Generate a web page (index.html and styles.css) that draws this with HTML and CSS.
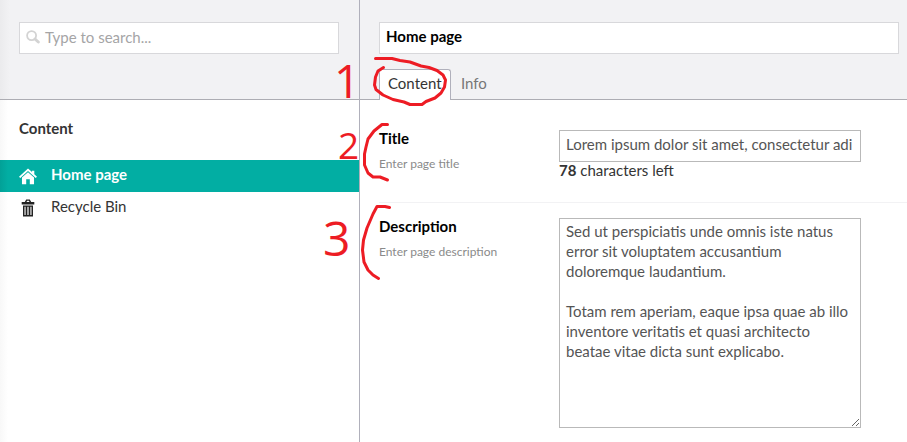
FILE: index.html
```html
<!DOCTYPE html>
<html lang="en">
<head>
<meta charset="utf-8">
<title>Home page</title>
<link rel="stylesheet" href="styles.css">
</head>
<body>
<div class="app">
  <aside class="sidebar">
    <div class="sidebar-header">
      <div class="search">
        <svg class="search-icon" width="14" height="14" viewBox="0 0 14 14"><circle cx="5.6" cy="5.6" r="4.5"/><path d="M9 9l3.3 3"/></svg>
        <span>Type to search...</span>
      </div>
    </div>
    <h2 class="tree-title">Content</h2>
    <nav class="tree">
      <a class="node active">
        <svg class="node-icon" width="18" height="17" viewBox="0 0 20 18"><path d="M10 0L0 9.2l1.4 1.5L10 3l8.600 7.700L20 9.200l-3-2.800V2.500h-2.500v1.600z"/><path d="M10 4.200L3.300 10.200V17.500H8V12h4v5.500h4.700V10.200z"/></svg>
        <span>Home page</span>
      </a>
      <a class="node">
        <svg class="node-icon" width="18" height="18" viewBox="0 0 18 18"><path d="M3 3h2.800l1.400-2.500h3.600L12.200 3H15.300v2.500H2.700V3zM7.500 3h3l-.6-1.300H8.100z"/><path fill-rule="evenodd" d="M4 6.500h10V17.500H4zM5.500 7.800v8.200h1.100V7.800zM8.400 7.800v8.200h1.200V7.800zM11.400 7.800v8.200h1.100V7.800z"/></svg>
        <span>Recycle Bin</span>
      </a>
    </nav>
  </aside>
  <main class="editor">
    <header class="editor-header">
      <div class="name-field">Home page</div>
      <div class="tabs">
        <a class="tab selected">Content</a>
        <a class="tab">Info</a>
      </div>
    </header>
    <section class="property">
      <div class="label"><h3>Title</h3><small>Enter page title</small></div>
      <div class="control">
        <div class="textbox">Lorem ipsum dolor sit amet, consectetur adi</div>
        <p class="counter"><b>78</b> characters left</p>
      </div>
    </section>
    <section class="property second">
      <div class="label"><h3>Description</h3><small>Enter page description</small></div>
      <div class="control">
        <textarea class="textarea">Sed ut perspiciatis unde omnis iste natus error sit voluptatem accusantium doloremque laudantium.

Totam rem aperiam, eaque ipsa quae ab illo inventore veritatis et quasi architecto beatae vitae dicta sunt explicabo.</textarea>
      </div>
    </section>
  </main>
  <svg class="notes" width="907" height="442" viewBox="0 0 907 442">
    <path d="M375.500 58.500H392L400 60.500L410 62L421 66L429 67.500L437 70.500L443 75L445.500 80L444.500 87L441 93L435 98L426 101.500L422 104.500L410 104.500L404 102L393 99.500L383 95L376 89.500L374.500 85L375.500 77L378 71L383.500 67.500"/>
    <path d="M387.500 124.500H382L374 131L368 139L366 147L364.500 154L364.500 165L368 173L373 177H380L387.500 180"/>
    <path d="M389.500 207.500L385 206.500H377L373 214L367 228L363.500 240L362.500 250L364 262L368 270L373 275L378.500 278.500"/>
    <text class="one" x="334" y="98">1</text>
    <text class="two" x="338" y="159">2</text>
    <text class="three" x="323" y="256">3</text>
  </svg>
</div>
</body>
</html>
```
FILE: styles.css
```css
* { box-sizing: border-box; }
body { margin: 0; font: 15px/20px Lato, sans-serif; color: #343434; background: #fff; }
h2, h3, p { margin: 0; }
.app { position: relative; display: flex; width: 907px; height: 442px; overflow: hidden; }
.sidebar { width: 360px; border-right: 1px solid #b0b0bb; background: linear-gradient(90deg, #f8f8f8, #fff 8px); }
.sidebar-header { height: 100px; padding: 22px 20px 0 19px; border-bottom: 1px solid #adadb3; background: linear-gradient(90deg, #ebebed, #f2f2f4 10px); }
.search { display: flex; align-items: center; height: 32px; padding: 0 6px 2px; gap: 5px; border: 1px solid #d8d8db; background: #fff; color: #a5a5a6; }
.search span { padding-bottom: 1px; }
.search-icon { fill: none; stroke: #d3d3d3; stroke-width: 1.8; stroke-linecap: round; }
.search-icon path { stroke-width: 3; }
.tree-title { margin: 18px 0 22px 19px; font-size: 15px; line-height: 20px; font-weight: 700; }
.node { display: flex; align-items: center; height: 32px; padding: 0 19px 0; gap: 14px; }
.node span { padding-bottom: 4px; }
.node-icon { fill: #222; }
.active { background: linear-gradient(90deg, #02a197, #02aea3 8px); color: #fff; font-weight: 700; }
.active .node-icon { fill: #fff; }
.editor { flex: 1; min-width: 0; }
.editor-header { height: 100px; padding: 22px 8px 0 19px; border-bottom: 1px solid #adadb3; background: #f2f2f4; }
.name-field { height: 32px; padding: 3px 6px; border: 1px solid #d8d8db; background: #fff; color: #000; font-weight: 700; }
.tabs { display: flex; margin-top: 15px; }
.tab { height: 30px; padding: 3px 9px; border: 1px solid transparent; border-bottom: 0; color: #777; }
.selected { height: 31px; padding: 3px 8px; width: 72px; border-color: #b0b0bb; border-radius: 3px 3px 0 0; background: #fff; color: #343434; }
.property { display: flex; margin-left: 19px; height: 103px; padding-top: 30px; border-bottom: 1px solid #f2f2f4; }
.second { height: 239px; padding-top: 15px; border: 0; }
.label { width: 180px; }
h3 { margin-top: -2px; font-size: 15px; line-height: 20px; font-weight: 700; color: #000; }
small { display: block; margin-top: 7px; font-size: 12px; line-height: 18px; color: #8a8a8a; }
.textbox { width: 302px; height: 32px; padding: 3px 6px; border: 1px solid #b9b9b9; color: #555; white-space: nowrap; overflow: hidden; }
.counter { margin-top: -2px; }
.textarea { display: block; width: 302px; height: 210px; padding: 2px 6px; border: 1px solid #b9b9b9; color: #555; font: inherit; outline: 0; }
.notes { position: absolute; left: 0; top: 0; fill: none; stroke: #ed1c24; stroke-width: 3; stroke-linecap: round; stroke-linejoin: round; pointer-events: none; }
.notes text { fill: #ed1c24; stroke: none; font-family: "Open Sans", sans-serif; }
.one { font-size: 46px; }
.two { font-size: 37px; }
.three { font-size: 48px; }
```
